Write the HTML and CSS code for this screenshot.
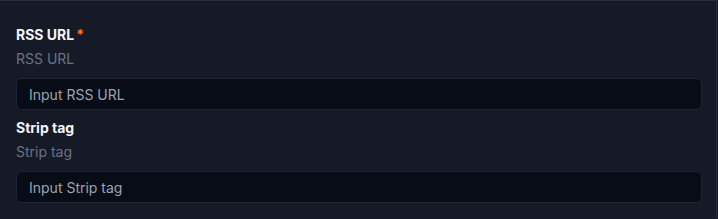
FILE: index.html
```html
<!DOCTYPE html>
<html lang="en">
<head>
    <meta charset="UTF-8">
    <meta name="viewport" content="width=device-width, initial-scale=1.0">
    <title>RSS settings</title>
    <link rel="stylesheet" href="styles.css">
</head>
<body>
    <div class="panel">
        <div class="field">
            <label class="field-label" for="rss-url">RSS URL<span class="required">*</span></label>
            <div class="field-desc">RSS URL</div>
            <input class="field-input" id="rss-url" type="text" placeholder="Input RSS URL">
        </div>
        <div class="field">
            <label class="field-label" for="strip-tag">Strip tag</label>
            <div class="field-desc">Strip tag</div>
            <input class="field-input" id="strip-tag" type="text" placeholder="Input Strip tag">
        </div>
    </div>
</body>
</html>
```

FILE: styles.css
```css
html, body {
    margin: 0;
    padding: 0;
    background-color: #161a27;
    font-family: Inter, 'Noto Sans', sans-serif;
    font-size: 14px;
}

.panel {
    width: 717px;
    height: 218px;
    box-sizing: border-box;
    border-top: 1px solid #272d40;
    border-right: 1px solid #2a2e40;
    padding: 24px 14px 0 16px;
    background-color: #161a27;
}

.field {
    display: flex;
    flex-direction: column;
    margin-bottom: 8px;
}

.field-label {
    color: #f3f4f6;
    font-weight: 700;
    line-height: 20px;
}

.required {
    color: #f97316;
    margin-left: 2px;
}

.field-desc {
    color: #6b7280;
    line-height: 20px;
    margin-top: 4px;
}

.field-input {
    margin-top: 9px;
    height: 32px;
    box-sizing: border-box;
    padding: 0 12px;
    background-color: #080c16;
    border: 1px solid #1d2435;
    border-radius: 6px;
    color: #e5e7eb;
    font-family: inherit;
    font-size: 14px;
    outline: none;
}

.field-input::placeholder {
    color: #9ca3af;
}
```
